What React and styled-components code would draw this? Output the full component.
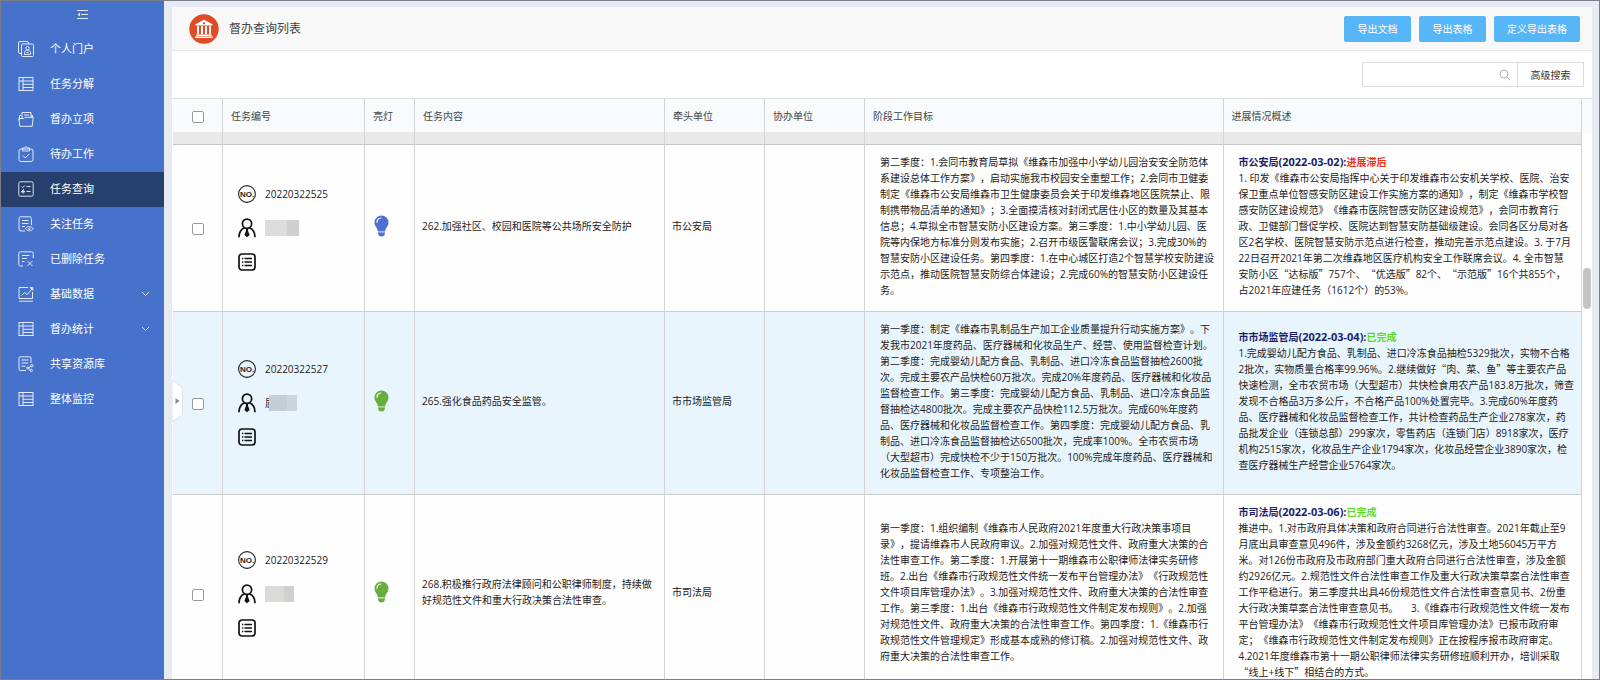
import { useState } from "react";
import styled, { createGlobalStyle } from "styled-components";

const GlobalStyle = createGlobalStyle`
  * {
    box-sizing: border-box;
  }
  body {
    margin: 0;
    font-family: "Open Sans", "Noto Sans CJK SC", sans-serif;
    font-size: 10px;
    line-height: 16px;
    color: #222;
    text-spacing-trim: space-all;
  }
  button, input {
    font: inherit;
    color: inherit;
  }
`;

const Frame = styled.div`
  display: flex;
  height: 100vh;
  border: 1px solid #7b7e86;
  overflow: hidden;
`;

const Sidebar = styled.aside`
  flex: none;
  width: 163px;
  background: #4772cb;
  color: #fff;
`;

const FoldButton = styled.button`
  display: flex;
  align-items: center;
  justify-content: center;
  width: 100%;
  height: 31px;
  padding: 0 0 4px;
  border: 0;
  background: none;
  cursor: pointer;
`;

const MenuLink = styled.a`
  display: flex;
  align-items: center;
  gap: 16px;
  height: 35px;
  padding: 0 14px 2px 17px;
  font-size: 11px;
  color: #fff;
  text-decoration: none;
  background: ${(props) => (props.$active ? "#263f6c" : "transparent")};

  span {
    flex: 1;
  }
`;

const LineIcon = styled.svg`
  flex: none;
  fill: none;
  stroke: currentColor;
  opacity: ${(props) => (props.$dim ? 0.75 : 0.85)};
`;

const Main = styled.main`
  position: relative;
  display: flex;
  flex: 1;
  min-width: 0;
  padding: 6px 7px 0 8px;
  background: #e6eaf3;
`;

const Panel = styled.section`
  display: flex;
  flex-direction: column;
  flex: 1;
  min-width: 0;
  background: #fff;
`;

const PanelHeader = styled.header`
  display: flex;
  align-items: center;
  flex: none;
  gap: 10px;
  height: 44px;
  padding: 0 12px 0 17px;
  background: #f8f8f8;
  border-bottom: 1px solid #e6e6e6;

  h1 {
    flex: 1;
    margin: 0;
    font-size: 12px;
    font-weight: 400;
    color: #444;
  }
`;

const Actions = styled.div`
  display: flex;
  gap: 8px;
`;

const ActionButton = styled.button`
  min-width: 67px;
  height: 26px;
  padding: 0 13px;
  border: 0;
  border-radius: 2px;
  background: #56b6f7;
  color: #fff;
  cursor: pointer;
`;

const Toolbar = styled.div`
  display: flex;
  align-items: center;
  justify-content: flex-end;
  flex: none;
  height: 47px;
  padding-right: 8px;
`;

const SearchBox = styled.label`
  display: flex;
  align-items: center;
  width: 155px;
  height: 25px;
  padding-right: 6px;
  border: 1px solid #dcdcdc;
  border-right: 0;

  input {
    flex: 1;
    min-width: 0;
    padding: 0 6px;
    border: 0;
    outline: 0;
    background: none;
  }
`;

const AdvancedButton = styled.button`
  width: 67px;
  height: 25px;
  padding: 0;
  border: 1px solid #dcdcdc;
  background: #fff;
  color: #333;
  cursor: pointer;
`;

const TableArea = styled.div`
  display: flex;
  flex: 1;
  min-height: 0;
  padding-left: 1px;
  border-top: 1px solid #dedede;
  overflow: hidden;
`;

const TableScroll = styled.div`
  flex: 1;
  min-width: 0;
  overflow: hidden;
`;

const ScrollTrack = styled.div`
  flex: none;
  width: 10px;
  padding: 169px 1px 0;
  background: linear-gradient(#f7fbfe 34px, #fff 34px);
`;

const ScrollThumb = styled.div`
  height: 41px;
  border-radius: 4px;
  background: #c4c4c4;
`;

const Table = styled.table`
  width: 100%;
  table-layout: fixed;
  border-collapse: separate;
  border-spacing: 0;
`;

const Col = styled.col`
  width: ${(props) => props.$width};
`;

const HeadCell = styled.th`
  height: 46px;
  padding: 0 8px 12px;
  border-right: 1px solid #d2d4d6;
  border-bottom: 1px solid #c8c8c8;
  background: #f7fbfe;
  box-shadow: inset 0 -12px #e9e9e9;
  font-weight: 400;
  color: #444;
  text-align: ${(props) => props.$align || "left"};
`;

const Row = styled.tr`
  background: ${(props) => (props.$hovered ? "#e9f5fd" : "#fefefe")};
`;

const Cell = styled.td`
  padding: 9px 7px 13px;
  border-right: 1px solid #d2d4d6;
  border-bottom: 1px solid #cdcfd1;
  vertical-align: middle;
  text-align: ${(props) => props.$align || "left"};
`;

const LongCell = styled(Cell)`
  padding-left: 15px;
  padding-right: 0;
`;

const IconCell = styled(Cell)`
  padding-left: 9px;

  svg {
    display: block;
  }
`;

const CheckCell = styled(Cell)`
  padding-top: 11px;
  padding-bottom: 11px;
`;

const NumberCell = styled(CheckCell)`
  padding-left: 15px;
`;

const Checkbox = styled.input`
  appearance: none;
  display: inline-block;
  width: 12px;
  height: 12px;
  margin: 0;
  border: 1px solid #999;
  border-radius: 2px;
  background: #fff;
  vertical-align: middle;

  &:checked {
    background: #4772cb;
  }
`;

const InfoLine = styled.div`
  display: flex;
  align-items: center;
  gap: 9px;
  height: 34px;
`;

const NameText = styled.div`
  display: flex;
  align-items: center;
`;

const NameMask = styled.i`
  position: relative;
  width: ${(props) => props.$width};
  height: 16px;
  margin-left: ${(props) => (props.$over ? "-6px" : "0")};
  background: linear-gradient(
    90deg,
    ${(props) => props.$from} 66%,
    ${(props) => props.$to} 66%
  );
`;

const Unit = styled.strong`
  color: #1b1f6b;
`;

const DateText = styled.span`
  font-size: 11px;
`;

const Status = styled.strong`
  color: ${(props) => (props.$done ? "#5fdc1e" : "#ea3313")};
`;

const TextLine = styled.div`
  white-space: pre-wrap;
`;

const WideQuote = styled.span`
  font-family: "Noto Sans CJK SC", sans-serif;
`;

const Handle = styled.button`
  position: absolute;
  left: 8px;
  top: 379px;
  width: 11px;
  height: 42px;
  padding: 0;
  border: 0;
  background: none;
  cursor: pointer;

  svg {
    display: block;
  }
`;

const menuIcons = {
  portal: (
    <>
      <path d="M3.5 12.5H2A1.5 1.5 0 0 1 .5 11V2A1.5 1.5 0 0 1 2 .5h7A1.5 1.5 0 0 1 10.5 2v1" />
      <rect x="3.5" y="3" width="12" height="12.5" rx="1" />
      <circle cx="9.5" cy="7.2" r="1.7" />
      <path d="M6.5 13.5v-2.2c0-1.2 1.2-2 3-2s3 .8 3 2v2zM8.5 11.5h2" />
    </>
  ),
  grid: (
    <>
      <rect x="1" y="1.5" width="14" height="13" />
      <path d="M1 5h14M5 1.5v13M5 8.3h10M5 11.5h10" />
    </>
  ),
  folder: (
    <>
      <path d="M1.5 9V4.5h2M4 7V1.5h9V7M6 4h5M14.5 7V4.5H13" />
      <path d="M.8 7.5h5l1.2-1.2h8.2l-1 9H1.8z" />
    </>
  ),
  clip: (
    <>
      <rect x="1" y="3" width="14" height="12.5" rx="2" />
      <path d="M4.5 5V2h2c.4-1.6 2.6-1.6 3 0h2v3zM4.8 9.5l2.4 2.4 4-4" />
    </>
  ),
  query: (
    <>
      <rect x=".8" y=".8" width="14.4" height="14.4" rx="1.5" />
      <path d="M3.5 5.5l1.3 1.2 2-2.2M8.5 5.5h4M8.5 10.5h4M6 8.2l-2.5 2.3M4 10.5h3" />
      <circle cx="5" cy="10.8" r="1.2" />
    </>
  ),
  follow: (
    <>
      <path d="M7 15H3a2 2 0 0 1-2-2V2.5A1.7 1.7 0 0 1 2.7.8h9a1.7 1.7 0 0 1 1.7 1.7V9M4 4.5h6.5M4 7.5h6.5M4 10.5h3" />
      <path d="M7.5 12.7c1.8-2.8 6-2.8 7.8 0-1.8 2.8-6 2.8-7.8 0z" />
      <circle cx="11.4" cy="12.7" r=".8" />
    </>
  ),
  deleted: (
    <path d="M5 15H2.500A1.700 1.700 0 0 1 .8 13.300V2.500A1.700 1.700 0 0 1 2.500.8h11a1.700 1.700 0 0 1 1.700 1.700V7M4 4.500h7.500M4 7.500h5M4 10.500h2.500M9.500 10l5 5M14.500 10l-5 5" />
  ),
  chart: (
    <>
      <path d="M10 1.5H1v11h13.500V6M1 15.200h14M3.500 9.500l3-3 2.500 2L14 3" />
      <path d="M12 1.500h2.800v2.800z" fill="currentColor" />
    </>
  ),
  share: (
    <>
      <path d="M8 14.500H2.500A1.500 1.500 0 0 1 1 13V2A1.200 1.200 0 0 1 2.200.8h9.600A1.200 1.200 0 0 1 13 2v5M3.500 4h7M3.500 7h7M3.500 10.200h4M13.500 10l-3.500 2 3 2.500" />
      <circle cx="13.8" cy="9.7" r="1.2" />
      <circle cx="9.8" cy="12" r="1.1" />
      <circle cx="13.3" cy="14.4" r="1.1" />
    </>
  ),
};

const menu = [
  { label: "个人门户", icon: "portal" },
  { label: "任务分解", icon: "grid" },
  { label: "督办立项", icon: "folder" },
  { label: "待办工作", icon: "clip" },
  { label: "任务查询", icon: "query" },
  { label: "关注任务", icon: "follow" },
  { label: "已删除任务", icon: "deleted" },
  { label: "基础数据", icon: "chart", expandable: true },
  { label: "督办统计", icon: "grid", expandable: true },
  { label: "共享资源库", icon: "share" },
  { label: "整体监控", icon: "grid" },
];

const columns = [
  "任务编号",
  "亮灯",
  "任务内容",
  "牵头单位",
  "协办单位",
  "阶段工作目标",
  "进展情况概述",
];

const tasks = [
  {
    no: "20220322525",
    mask: { width: "34px", from: "#dcdcdc", to: "#cfcfd0" },
    light: "#4f6fd0",
    content: "262.加强社区、校园和医院等公共场所安全防护",
    unit: "市公安局",
    goal: `第二季度：1.会同市教育局草拟《维森市加强中小学幼儿园治安安全防范体
系建设总体工作方案》，启动实施我市校园安全重塑工作；2.会同市卫健委
制定《维森市公安局维森市卫生健康委员会关于印发维森地区医院禁止、限
制携带物品清单的通知》；3.全面摸清核对封闭式居住小区的数量及其基本
信息；4.草拟全市智慧安防小区建设方案。第三季度：1.中小学幼儿园、医
院等内保地方标准分则发布实施；2.召开市级医警联席会议；3.完成30%的
智慧安防小区建设任务。第四季度：1.在中心城区打造2个智慧学校安防建设
示范点，推动医院智慧安防综合体建设；2.完成60%的智慧安防小区建设任
务。`,
    date: "2022-03-02",
    status: "进展滞后",
    progress: `1. 印发《维森市公安局指挥中心关于印发维森市公安机关学校、医院、治安
保卫重点单位智感安防区建设工作实施方案的通知》，制定《维森市学校智
感安防区建设规范》《维森市医院智感安防区建设规范》，会同市教育行
政、卫健部门督促学校、医院达到智慧安防基础级建设。会同各区分局对各
区2名学校、医院智慧安防示范点进行检查，推动完善示范点建设。3. 于7月
22日召开2021年第二次维森地区医疗机构安全工作联席会议。4. 全市智慧
安防小区“达标版”757个、“优选版”82个、“示范版”16个共855个，
占2021年应建任务（1612个）的53%。`,
  },
  {
    no: "20220322527",
    hovered: true,
    name: "屈",
    mask: { width: "28px", from: "#c5ced7", to: "#ccd5dd" },
    light: "#67ad3f",
    content: "265.强化食品药品安全监管。",
    unit: "市市场监管局",
    goal: `第一季度：制定《维森市乳制品生产加工企业质量提升行动实施方案》。下
发我市2021年度药品、医疗器械和化妆品生产、经营、使用监督检查计划。
第二季度：完成婴幼儿配方食品、乳制品、进口冷冻食品监督抽检2600批
次。完成主要农产品快检60万批次。完成20%年度药品、医疗器械和化妆品
监督检查工作。第三季度：完成婴幼儿配方食品、乳制品、进口冷冻食品监
督抽检达4800批次。完成主要农产品快检112.5万批次。完成60%年度药
品、医疗器械和化妆品监督检查工作。第四季度：完成婴幼儿配方食品、乳
制品、进口冷冻食品监督抽检达6500批次，完成率100%。全市农贸市场
（大型超市）完成快检不少于150万批次。100%完成年度药品、医疗器械和
化妆品监督检查工作、专项整治工作。`,
    date: "2022-03-04",
    status: "已完成",
    progress: `1.完成婴幼儿配方食品、乳制品、进口冷冻食品抽检5329批次，实物不合格
2批次，实物质量合格率99.96%。2.继续做好“肉、菜、鱼”等主要农产品
快速检测，全市农贸市场（大型超市）共快检食用农产品183.8万批次，筛查
发现不合格品3万多公斤，不合格产品100%处置完毕。3.完成60%年度药
品、医疗器械和化妆品监督检查工作，共计检查药品生产企业278家次，药
品批发企业（连锁总部）299家次，零售药店（连锁门店）8918家次，医疗
机构2515家次，化妆品生产企业1794家次，化妆品经营企业3890家次，检
查医疗器械生产经营企业5764家次。`,
  },
  {
    no: "20220322529",
    mask: { width: "29px", from: "#dadad9", to: "#d0d0cf" },
    light: "#67ad3f",
    content: "268.积极推行政府法律顾问和公职律师制度，持续做好规范性文件和重大行政决策合法性审查。",
    unit: "市司法局",
    goal: `第一季度：1.组织编制《维森市人民政府2021年度重大行政决策事项目
录》，提请维森市人民政府审议。2.加强对规范性文件、政府重大决策的合
法性审查工作。第二季度：1.开展第十一期维森市公职律师法律实务研修
班。2.出台《维森市行政规范性文件统一发布平台管理办法》《行政规范性
文件项目库管理办法》。3.加强对规范性文件、政府重大决策的合法性审查
工作。第三季度：1.出台《维森市行政规范性文件制定发布规则》。2.加强
对规范性文件、政府重大决策的合法性审查工作。第四季度：1.《维森市行
政规范性文件管理规定》形成基本成熟的修订稿。2.加强对规范性文件、政
府重大决策的合法性审查工作。`,
    date: "2022-03-06",
    status: "已完成",
    progress: `推进中。1.对市政府具体决策和政府合同进行合法性审查。2021年截止至9
月底出具审查意见496件，涉及金额约3268亿元，涉及土地56045万平方
米。对126份市政府及市政府部门重大政府合同进行合法性审查，涉及金额
约2926亿元。2.规范性文件合法性审查工作及重大行政决策草案合法性审查
工作平稳进行。第三季度共出具46份规范性文件合法性审查意见书、2份重
大行政决策草案合法性审查意见书。　 3.《维森市行政规范性文件统一发布
平台管理办法》《维森市行政规范性文件项目库管理办法》已报市政府审
定；《维森市行政规范性文件制定发布规则》正在按程序报市政府审定。
4.2021年度维森市第十一期公职律师法律实务研修班顺利开办，培训采取
“线上+线下”相结合的方式。`,
  },
];

// curly quotes take the full-width glyphs of the CJK font
const renderLine = (line) =>
  line
    .split(/([“”])/)
    .map((part, i) =>
      part === "“" || part === "”" ? (
        <WideQuote key={i}>{part}</WideQuote>
      ) : (
        part
      )
    );

const LongText = ({ text }) =>
  text.split("\n").map((line) => <TextLine key={line}>{renderLine(line)}</TextLine>);

const FoldIcon = () => (
  <LineIcon width="11" height="9" viewBox="0 0 11 9">
    <path d="M0 .5h11M4 4.500h7M0 8.500h11" />
    <path d="M3 2.500v4L.5 4.500z" fill="currentColor" stroke="none" />
  </LineIcon>
);

const BankIcon = () => (
  <svg width="30" height="30" viewBox="0 0 30 30">
    <circle cx="15" cy="15" r="14.7" fill="#de4b27" />
    <g fill="#fff">
      <path d="M15 5.800l8.500 4.400v1.300h-17v-1.300z" />
      <path d="M8 12.300h2v8H8zM12 12.300h2v8h-2zM16 12.300h2v8h-2zM20 12.300h2v8h-2z" />
      <path d="M7.300 20.500h15.400V22H7.300zM6.200 22.500h17.600V24H6.200z" />
    </g>
    <circle cx="15" cy="9.3" r="1.1" fill="#de4b27" />
  </svg>
);

const SearchIcon = () => (
  <LineIcon width="12" height="12" viewBox="0 0 12 12" $dim>
    <circle cx="5" cy="5" r="4" stroke="#999" />
    <path d="M8 8l3.300 3.300" stroke="#999" />
  </LineIcon>
);

const NoIcon = () => (
  <svg width="18" height="18" viewBox="0 0 18 18">
    <circle cx="9" cy="9" r="8.4" fill="none" stroke="#222" strokeWidth="1.1" />
    <text
      x="9"
      y="12"
      textAnchor="middle"
      fontFamily="Liberation Sans, sans-serif"
      fontSize="8"
      fontWeight="700"
      fill="#222"
    >
      NO.
    </text>
  </svg>
);

const PersonIcon = () => (
  <svg width="18" height="20" viewBox="0 0 18 20">
    <g fill="none" stroke="#111" strokeWidth="1.7">
      <circle cx="9" cy="5.7" r="4.6" />
      <path d="M1 19.300c0-4.600 2-8 5.600-9.500M17 19.300c0-4.600-2-8-5.600-9.500" />
    </g>
    <path d="M7.500 10.500h3l-.6 2 1.700 4.500L9 19.300 6.400 17l1.700-4.500z" fill="#111" />
  </svg>
);

const ListIcon = () => (
  <svg width="18" height="18" viewBox="0 0 18 18">
    <rect x="1" y="1" width="16" height="16" rx="3" fill="none" stroke="#111" strokeWidth="1.7" />
    <path
      d="M4 5.500h1.300M6.500 5.500H14M4 9h1.300M6.500 9H14M4 12.500h1.300M6.500 12.500H14"
      stroke="#111"
      strokeWidth="1.3"
    />
  </svg>
);

const BulbIcon = ({ color }) => (
  <svg width="15" height="22" viewBox="0 0 15 22">
    <path
      d="M7.500.5a7 7 0 0 1 7 7c0 2.600-1.300 4-2.300 5.600-.6 1-.8 2-1 2.900H3.800c-.2-.9-.4-1.900-1-2.900C1.800 11.500.5 10.100.5 7.500a7 7 0 0 1 7-7z"
      fill={color}
    />
    <path d="M4 16h7v1.500H4z" fill={color} opacity=".5" />
    <path d="M4 17.500h7c0 2.500-1.200 4-3.500 4S4 20 4 17.500z" fill={color} />
    <path d="M3 7.200C3.100 4.900 4.600 3.200 6.800 3" fill="none" stroke="#fff" strokeWidth="1.2" strokeLinecap="round" />
  </svg>
);

const TaskRow = ({ task }) => (
  <Row $hovered={task.hovered}>
    <CheckCell $align="center">
      <Checkbox type="checkbox" aria-label={task.no} />
    </CheckCell>
    <NumberCell>
      <InfoLine>
        <NoIcon />
        {task.no}
      </InfoLine>
      <InfoLine>
        <PersonIcon />
        <NameText>
          {task.name}
          <NameMask
            $width={task.mask.width}
            $from={task.mask.from}
            $to={task.mask.to}
            $over={Boolean(task.name)}
          />
        </NameText>
      </InfoLine>
      <InfoLine>
        <ListIcon />
      </InfoLine>
    </NumberCell>
    <IconCell>
      <BulbIcon color={task.light} />
    </IconCell>
    <Cell>{task.content}</Cell>
    <Cell>{task.unit}</Cell>
    <Cell />
    <LongCell>
      <LongText text={task.goal} />
    </LongCell>
    <LongCell>
      <TextLine>
        <Unit>
          {task.unit}
          <DateText>({task.date}):</DateText>
        </Unit>
        <Status $done={task.status === "已完成"}>{task.status}</Status>
      </TextLine>
      <LongText text={task.progress} />
    </LongCell>
  </Row>
);

const App = () => {
  const [active, setActive] = useState("任务查询");

  return (
    <>
      <GlobalStyle />
      <Frame>
        <Sidebar>
          <FoldButton aria-label="菜单">
            <FoldIcon />
          </FoldButton>
          <nav>
            {menu.map((item) => (
              <MenuLink
                key={item.label}
                href="#"
                $active={active === item.label}
                onClick={() => setActive(item.label)}
              >
                <LineIcon width="16" height="16" viewBox="0 0 16 16">
                  {menuIcons[item.icon]}
                </LineIcon>
                <span>{item.label}</span>
                {item.expandable && (
                  <LineIcon width="9" height="6" viewBox="0 0 9 6" $dim>
                    <path d="M1 1l3.500 3.500L8 1" />
                  </LineIcon>
                )}
              </MenuLink>
            ))}
          </nav>
        </Sidebar>

        <Main>
          <Panel>
            <PanelHeader>
              <BankIcon />
              <h1>督办查询列表</h1>
              <Actions>
                <ActionButton>导出文档</ActionButton>
                <ActionButton>导出表格</ActionButton>
                <ActionButton>定义导出表格</ActionButton>
              </Actions>
            </PanelHeader>

            <Toolbar>
              <SearchBox>
                <input type="text" aria-label="搜索" />
                <SearchIcon />
              </SearchBox>
              <AdvancedButton>高级搜索</AdvancedButton>
            </Toolbar>

            <TableArea>
              <TableScroll>
                <Table>
                  <colgroup>
                    <Col $width="50px" />
                    <Col $width="142px" />
                    <Col $width="50px" />
                    <Col $width="250px" />
                    <Col $width="100px" />
                    <Col $width="100px" />
                    <Col $width="auto" />
                    <Col $width="auto" />
                  </colgroup>
                  <thead>
                    <tr>
                      <HeadCell $align="center">
                        <Checkbox type="checkbox" aria-label="全选" />
                      </HeadCell>
                      {columns.map((name) => (
                        <HeadCell key={name}>{name}</HeadCell>
                      ))}
                    </tr>
                  </thead>
                  <tbody>
                    {tasks.map((task) => (
                      <TaskRow key={task.no} task={task} />
                    ))}
                  </tbody>
                </Table>
              </TableScroll>
              <ScrollTrack>
                <ScrollThumb />
              </ScrollTrack>
            </TableArea>
          </Panel>

          <Handle aria-label="展开">
            <svg width="11" height="42" viewBox="0 0 11 42">
              <path d="M0 0l7 5c2.500 1.700 3.500 3 3.500 5v22c0 2-1 3.300-3.500 5l-7 5z" fill="#fff" stroke="#dfe3e8" />
              <path d="M3.500 18v6l4-3z" fill="#888" />
            </svg>
          </Handle>
        </Main>
      </Frame>
    </>
  );
};

export default App;
